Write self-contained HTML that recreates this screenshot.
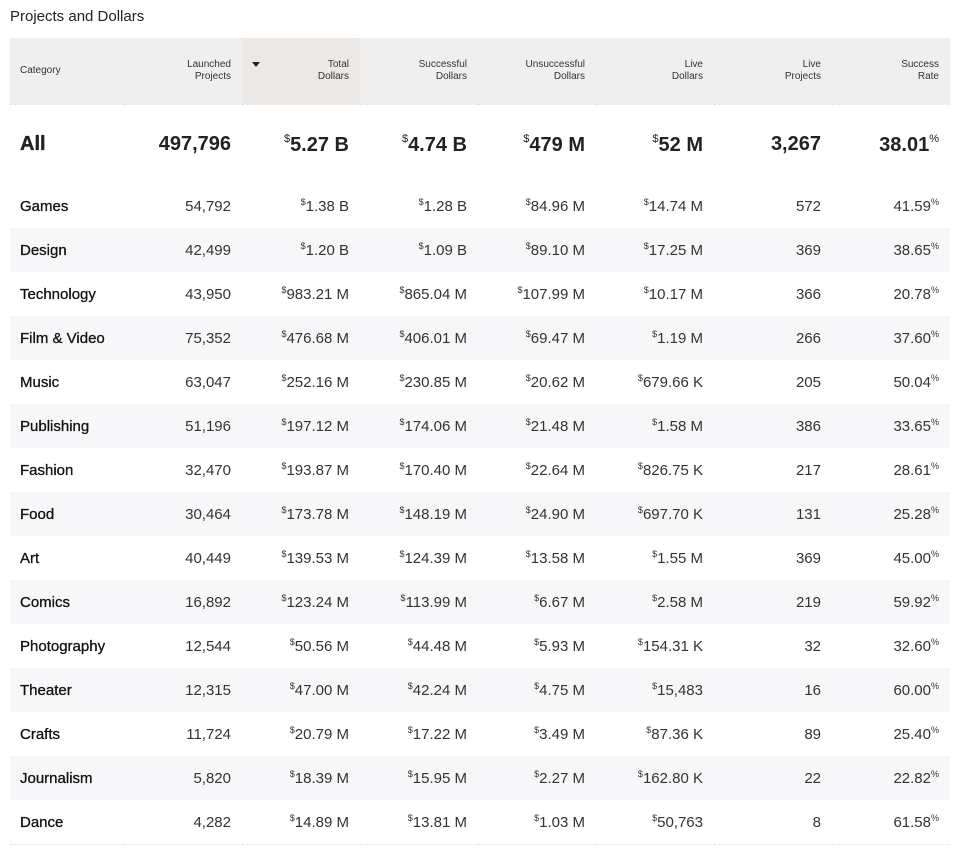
<!DOCTYPE html>
<html><head><meta charset="utf-8"><style>
body{margin:0;background:#fff;font-family:"Liberation Sans",sans-serif;color:#222;width:969px;height:852px;overflow:hidden}
h1{position:absolute;left:10px;top:8px;margin:0;font-size:15px;font-weight:normal;color:#222}
table{position:absolute;left:10px;top:38px;border-collapse:collapse;table-layout:fixed;width:940px}
col.c{width:114px}col.n{width:118px}
th{height:66px;background:#efefef;font-size:10px;font-weight:normal;text-align:right;padding:0 11px;line-height:12px;color:#333;position:relative;border-bottom:1px dotted #ddd}
th.l{text-align:left;padding-left:10px}
th.s{background:#ebe8e5}
th.s:before{content:"";position:absolute;left:10px;top:24px;border:4px solid transparent;border-top:5px solid #222;border-bottom:0}
td{height:44px;font-size:15px;text-align:right;padding:0 11px;color:#333;white-space:nowrap}
td.l{text-align:left;padding-left:10px;color:#111;-webkit-text-stroke:0.3px #111}
tr.all td{height:79px;font-size:20px;font-weight:bold;color:#222}
tr.all td.l{font-size:20px}
tr.g td{background:#f7f7fa}
sup{font-size:9px;vertical-align:6px}
tr.all sup{font-size:11px;vertical-align:9px;font-weight:normal}
tr.last td{border-bottom:1px dotted #ddd}
</style></head><body>
<h1>Projects and Dollars</h1>
<table>
<colgroup><col class="c"><col class="n"><col class="n"><col class="n"><col class="n"><col class="n"><col class="n"><col class="n"></colgroup>
<tr><th class="l">Category</th><th>Launched<br>Projects</th><th class="s">Total<br>Dollars</th><th>Successful<br>Dollars</th><th>Unsuccessful<br>Dollars</th><th>Live<br>Dollars</th><th>Live<br>Projects</th><th>Success<br>Rate</th></tr>
<tr class="all"><td class="l">All</td><td>497,796</td><td><sup>$</sup>5.27 B</td><td><sup>$</sup>4.74 B</td><td><sup>$</sup>479 M</td><td><sup>$</sup>52 M</td><td>3,267</td><td>38.01<sup>%</sup></td></tr>
<tr><td class="l">Games</td><td>54,792</td><td><sup>$</sup>1.38 B</td><td><sup>$</sup>1.28 B</td><td><sup>$</sup>84.96 M</td><td><sup>$</sup>14.74 M</td><td>572</td><td>41.59<sup>%</sup></td></tr>
<tr class="g"><td class="l">Design</td><td>42,499</td><td><sup>$</sup>1.20 B</td><td><sup>$</sup>1.09 B</td><td><sup>$</sup>89.10 M</td><td><sup>$</sup>17.25 M</td><td>369</td><td>38.65<sup>%</sup></td></tr>
<tr><td class="l">Technology</td><td>43,950</td><td><sup>$</sup>983.21 M</td><td><sup>$</sup>865.04 M</td><td><sup>$</sup>107.99 M</td><td><sup>$</sup>10.17 M</td><td>366</td><td>20.78<sup>%</sup></td></tr>
<tr class="g"><td class="l">Film &amp; Video</td><td>75,352</td><td><sup>$</sup>476.68 M</td><td><sup>$</sup>406.01 M</td><td><sup>$</sup>69.47 M</td><td><sup>$</sup>1.19 M</td><td>266</td><td>37.60<sup>%</sup></td></tr>
<tr><td class="l">Music</td><td>63,047</td><td><sup>$</sup>252.16 M</td><td><sup>$</sup>230.85 M</td><td><sup>$</sup>20.62 M</td><td><sup>$</sup>679.66 K</td><td>205</td><td>50.04<sup>%</sup></td></tr>
<tr class="g"><td class="l">Publishing</td><td>51,196</td><td><sup>$</sup>197.12 M</td><td><sup>$</sup>174.06 M</td><td><sup>$</sup>21.48 M</td><td><sup>$</sup>1.58 M</td><td>386</td><td>33.65<sup>%</sup></td></tr>
<tr><td class="l">Fashion</td><td>32,470</td><td><sup>$</sup>193.87 M</td><td><sup>$</sup>170.40 M</td><td><sup>$</sup>22.64 M</td><td><sup>$</sup>826.75 K</td><td>217</td><td>28.61<sup>%</sup></td></tr>
<tr class="g"><td class="l">Food</td><td>30,464</td><td><sup>$</sup>173.78 M</td><td><sup>$</sup>148.19 M</td><td><sup>$</sup>24.90 M</td><td><sup>$</sup>697.70 K</td><td>131</td><td>25.28<sup>%</sup></td></tr>
<tr><td class="l">Art</td><td>40,449</td><td><sup>$</sup>139.53 M</td><td><sup>$</sup>124.39 M</td><td><sup>$</sup>13.58 M</td><td><sup>$</sup>1.55 M</td><td>369</td><td>45.00<sup>%</sup></td></tr>
<tr class="g"><td class="l">Comics</td><td>16,892</td><td><sup>$</sup>123.24 M</td><td><sup>$</sup>113.99 M</td><td><sup>$</sup>6.67 M</td><td><sup>$</sup>2.58 M</td><td>219</td><td>59.92<sup>%</sup></td></tr>
<tr><td class="l">Photography</td><td>12,544</td><td><sup>$</sup>50.56 M</td><td><sup>$</sup>44.48 M</td><td><sup>$</sup>5.93 M</td><td><sup>$</sup>154.31 K</td><td>32</td><td>32.60<sup>%</sup></td></tr>
<tr class="g"><td class="l">Theater</td><td>12,315</td><td><sup>$</sup>47.00 M</td><td><sup>$</sup>42.24 M</td><td><sup>$</sup>4.75 M</td><td><sup>$</sup>15,483</td><td>16</td><td>60.00<sup>%</sup></td></tr>
<tr><td class="l">Crafts</td><td>11,724</td><td><sup>$</sup>20.79 M</td><td><sup>$</sup>17.22 M</td><td><sup>$</sup>3.49 M</td><td><sup>$</sup>87.36 K</td><td>89</td><td>25.40<sup>%</sup></td></tr>
<tr class="g"><td class="l">Journalism</td><td>5,820</td><td><sup>$</sup>18.39 M</td><td><sup>$</sup>15.95 M</td><td><sup>$</sup>2.27 M</td><td><sup>$</sup>162.80 K</td><td>22</td><td>22.82<sup>%</sup></td></tr>
<tr class="last"><td class="l">Dance</td><td>4,282</td><td><sup>$</sup>14.89 M</td><td><sup>$</sup>13.81 M</td><td><sup>$</sup>1.03 M</td><td><sup>$</sup>50,763</td><td>8</td><td>61.58<sup>%</sup></td></tr>
</table>
</body></html>
